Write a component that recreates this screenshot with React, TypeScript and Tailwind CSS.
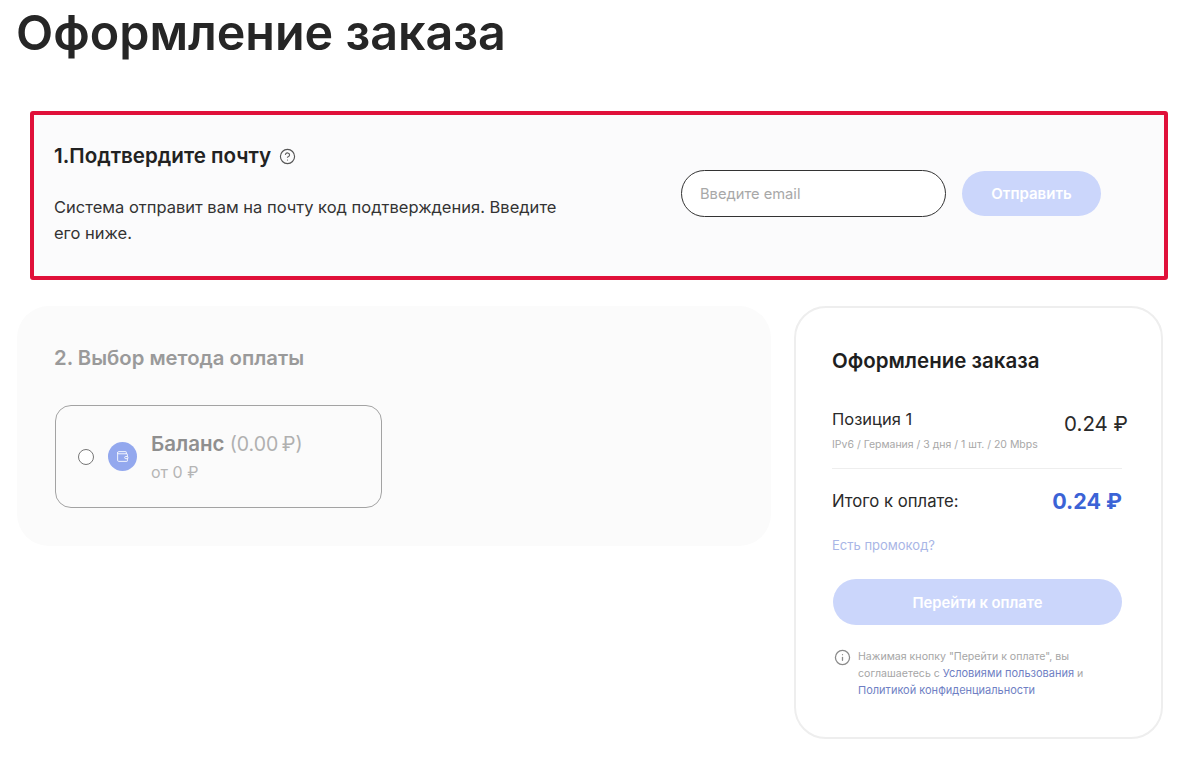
import { CircleHelp, Info, Wallet } from "lucide-react";

const font = { fontFamily: "Inter, 'Noto Sans', sans-serif" };

function PaymentOption() {
  return (
    <div className="w-[327px] h-[103px] ml-[38px] mt-[33px] rounded-[16px] border border-[#a3a3a3] flex items-center pl-[22px]">
      <span className="w-[16px] h-[16px] rounded-full border border-[#767676] bg-white" />
      <span className="ml-[14px] w-[29px] h-[29px] rounded-full bg-[#93a8ee] flex items-center justify-center">
        <Wallet size={13} color="#ffffff" strokeWidth={1.6} />
      </span>
      <div className="ml-[14px] mt-[1px]">
        <div className="text-[20.5px] leading-[28px] font-semibold text-[#8f8f8f]">
          Баланс <span className="text-[19.5px] font-normal text-[#b0b0b0]">(0.00{"\u2009"}₽)</span>
        </div>
        <div className="text-[16px] leading-[24px] mt-[2px] text-[#b5b5b5]">от 0 ₽</div>
      </div>
    </div>
  );
}

function Summary() {
  return (
    <div className="w-[369px] h-[433px] rounded-[32px] border-2 border-[#eeeeee] bg-white pt-[39px] pl-[36px] pr-[39px]">
      <h2 className="text-[20.5px] leading-[28px] font-semibold text-[#1f1f1f]">Оформление заказа</h2>
      <div className="flex justify-between mt-[32px]">
        <div>
          <div className="text-[16.5px] leading-[24px] text-[#2a2a2a]">Позиция 1</div>
          <div className="text-[10.5px] leading-[16px] mt-[6px] text-[#a8a8a8]">IPv6 / Германия / 3 дня / 1 шт. / 20 Mbps</div>
        </div>
        <div className="text-[20.5px] leading-[30px] mt-[2px] -mr-[6px] text-[#2a2a2a]">0.24 ₽</div>
      </div>
      <div className="h-px bg-[#eeeeee] mt-[15px]" />
      <div className="flex justify-between items-center mt-[18px]">
        <span className="text-[16.7px] leading-[28px] text-[#2a2a2a]">Итого к оплате:</span>
        <span className="text-[21.5px] leading-[28px] font-bold text-[#3b63d6]">0.24 ₽</span>
      </div>
      <div className="text-[13px] leading-[18px] mt-[21px] text-[#a9b6e6]">Есть промокод?</div>
      <button className="w-[289px] h-[46px] ml-[1px] mt-[25px] pt-[2px] rounded-full bg-[#cbd6fb] text-white text-[14.8px] font-semibold">
        Перейти к оплате
      </button>
      <div className="flex mt-[23px]">
        <Info size={17} color="#8a8a8a" strokeWidth={1.8} className="mt-[1px] ml-[2px] shrink-0" />
        <p className="ml-[7px] text-[10.6px] leading-[17px] text-[#a6a6a6]">
          Нажимая кнопку "Перейти к оплате", вы соглашаетесь с <span className="text-[11px] text-[#6f7fc4]">Условиями пользования</span> и{" "}
          <span className="text-[11px] text-[#6f7fc4]">Политикой конфиденциальности</span>
        </p>
      </div>
    </div>
  );
}

export default function App() {
  return (
    <div className="w-[1200px] h-[763px] overflow-hidden bg-white" style={font}>
      <h1 className="pl-[16px] text-[48.4px] leading-[66px] font-semibold text-[#262626]">Оформление заказа</h1>

      <section className="ml-[30px] mt-[45px] w-[1138px] h-[169px] rounded-[3px] border-[4px] border-[#e0103a] bg-[#fbfbfc] flex">
        <div className="pl-[20px] pt-[27px] w-[647px]">
          <div className="flex items-center">
            <h2 className="text-[20.6px] leading-[28px] font-semibold text-[#222222]">1.Подтвердите почту</h2>
            <CircleHelp size={17} color="#555555" strokeWidth={1.6} className="ml-[8px]" />
          </div>
          <p className="mt-[24px] w-[510px] text-[16.5px] leading-[26px] text-[#333333]">
            Система отправит вам на почту код подтверждения. Введите его ниже.
          </p>
        </div>
        <div className="flex items-center mb-[5px]">
          <div className="w-[265px] h-[47px] rounded-full border border-[#333333] bg-white flex items-center pl-[18px] pt-[2px] text-[14.7px] text-[#a8a8a8]">
            Введите email
          </div>
          <button className="ml-[16px] w-[139px] h-[45px] pt-[2px] rounded-full bg-[#cbd6fb] text-white text-[15px] font-semibold">
            Отправить
          </button>
        </div>
      </section>

      <div className="flex items-start pl-[17px] mt-[26px]">
        <section className="w-[754px] h-[240px] rounded-[32px] bg-[#fbfbfb] pt-[38px]">
          <h2 className="pl-[37px] text-[20.3px] leading-[28px] font-semibold text-[#9a9a9a]">2. Выбор метода оплаты</h2>
          <PaymentOption />
        </section>
        <div className="ml-[23px]">
          <Summary />
        </div>
      </div>
    </div>
  );
}
